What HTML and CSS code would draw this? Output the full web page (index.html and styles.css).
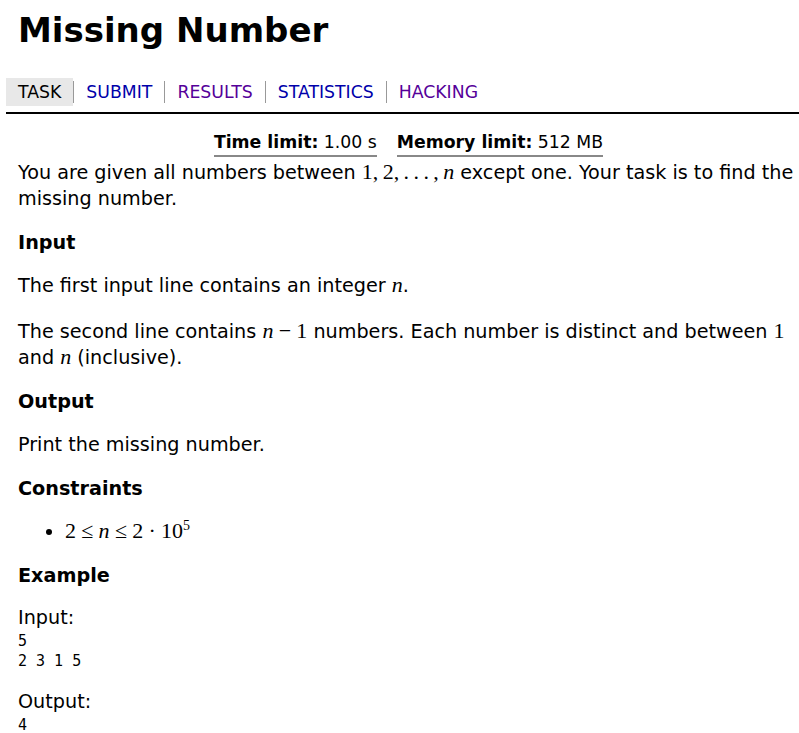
FILE: index.html
```html
<!DOCTYPE html>
<html>
<head>
<meta charset="utf-8">
<link rel="stylesheet" href="styles.css">
</head>
<body>
<div class="header">
  <h1 class="title">Missing Number</h1>
</div>
<div class="nav">
  <a class="tab current">TASK</a>
  <span class="sep"></span>
  <a class="tab link">SUBMIT</a>
  <span class="sep"></span>
  <a class="tab visited">RESULTS</a>
  <span class="sep"></span>
  <a class="tab link">STATISTICS</a>
  <span class="sep"></span>
  <a class="tab visited">HACKING</a>
</div>
<div class="content">
  <div class="limits">
    <span class="limit"><b>Time limit:</b> 1.00 s</span>
    <span class="limit"><b>Memory limit:</b> 512 MB</span>
  </div>
  <p class="first">You are given all numbers between <span class="math">1,&thinsp;2,&thinsp;.&thinsp;.&thinsp;.&thinsp;,&thinsp;<i>n</i></span> except one. Your task is to find the missing number.</p>
  <h2>Input</h2>
  <p>The first input line contains an integer <span class="math"><i>n</i></span>.</p>
  <p>The second line contains <span class="math"><i>n</i><span class="op">−</span>1</span> numbers. Each number is distinct and between <span class="math">1</span> and <span class="math"><i>n</i></span> (inclusive).</p>
  <h2>Output</h2>
  <p>Print the missing number.</p>
  <h2>Constraints</h2>
  <ul>
    <li><span class="math">2<span class="op">≤</span><i>n</i><span class="op">≤</span>2<span class="op">·</span>10<sup>5</sup></span></li>
  </ul>
  <h2>Example</h2>
  <p class="label">Input:</p>
  <pre>5
2 3 1 5</pre>
  <p class="label">Output:</p>
  <pre>4</pre>
</div>
</body>
</html>
```
FILE: styles.css
```css
html, body {
  margin: 0;
  padding: 0;
  background: #fff;
}
body {
  font-family: "DejaVu Sans", Verdana, sans-serif;
  font-size: 19.2px;
  color: #000;
  line-height: 26px;
}
.title {
  margin: 0;
  padding: 8px 0 0 18px;
  font-size: 34px;
  line-height: 44px;
  font-weight: bold;
}
.nav {
  margin: 26px 0 0 6px;
  display: flex;
  align-items: center;
  border-bottom: 2px solid #000;
  padding-bottom: 6px;
}
.tab {
  font-size: 17.3px;
  line-height: 28px;
  padding: 0 12px;
  text-decoration: none;
  cursor: pointer;
}
.tab.current {
  background: #e8e8e8;
  color: #000;
}
.tab.link { color: #0000aa; }
.tab.visited { color: #550099; }
.sep {
  width: 1px;
  height: 22px;
  background: #999;
}
.content {
  padding: 0 0 0 18px;
}
.limits {
  display: flex;
  justify-content: center;
  gap: 20px;
  margin-top: 17px;
  font-size: 17.3px;
  line-height: 22px;
}
.limit {
  border-bottom: 2px solid #888;
  padding-bottom: 2px;
}
p {
  margin: 20px 0 0;
}
p.first { margin-top: 3px; }
h2 {
  font-size: 19.2px;
  margin: 18px 0 0;
  line-height: 26px;
}
h2 + p { margin-top: 17px; }
.math {
  font-family: "Liberation Serif", "DejaVu Serif", serif;
  font-size: 22px;
  line-height: 20px;
}
.math i { font-style: italic; }
.math .op { margin: 0 0.24em; }
.math sup { font-size: 14px; line-height: 0; }
ul {
  margin: 17px 0 0;
  padding-left: 47px;
}
pre {
  margin: 0;
  font-family: "DejaVu Sans Mono", monospace;
  font-size: 15px;
  line-height: 20px;
}
h2 + .label { margin-top: 16px; }
pre + .label { margin-top: 18px; }
```
